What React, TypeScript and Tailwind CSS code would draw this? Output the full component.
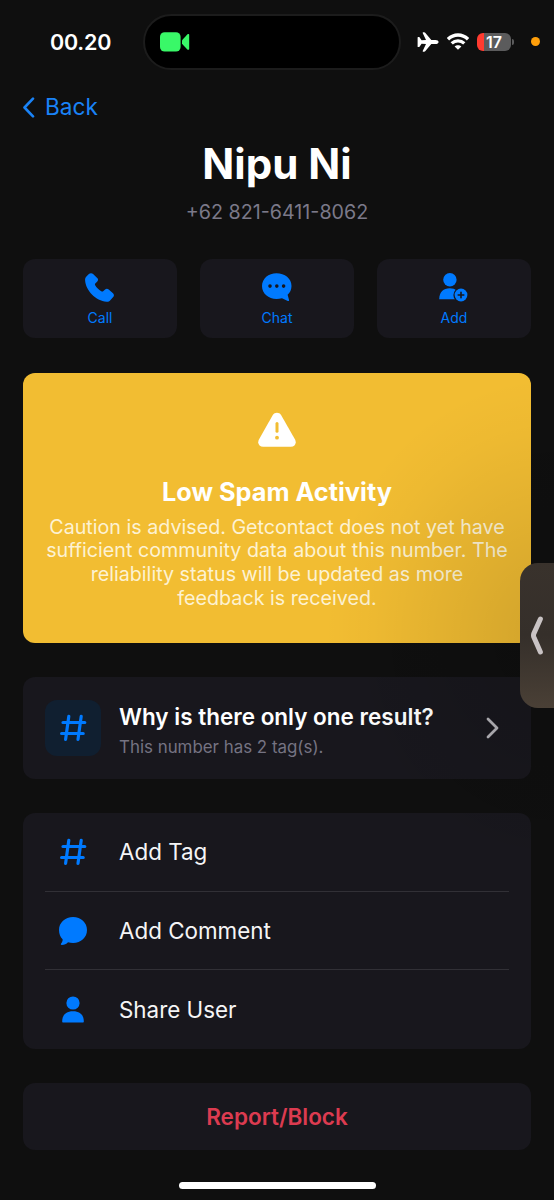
import type { ReactNode } from 'react';

function HashIcon() {
  return (
    <svg className="w-7 h-7" viewBox="0 0 28 28" fill="none" stroke="currentColor" strokeWidth="3.2" strokeLinecap="round">
      <path d="M4 8.5H25.8M2.6 19.5H24.2M9.8 2.4L6.6 25.4M22.2 2.4L19 25.4" />
    </svg>
  );
}

function PhoneIcon() {
  return (
    <svg className="w-[29px] h-[29px] -ml-px" viewBox="0 0 29 29" fill="currentColor">
      <path d="M3.6 1.2C4.9-.1 6.9-.2 8.1 1L12.2 5.1C13.4 6.3 13.3 7.3 12.3 8.4L10.5 10.2C9.8 10.9 9.8 11.6 10.2 12.3C11.4 14.5 13.8 16.9 16.3 18.3C17.1 18.7 17.8 18.6 18.4 18L20.1 16.5C21.2 15.5 22.6 15.5 23.7 16.5L28 20.3C29.2 21.4 29.2 23 28.2 24.1L25.3 27.3C24.3 28.4 23.2 28.9 21.6 28.8C10.8 28.1.6 17.3.1 7.3C0 5.6.4 4.5 1.4 3.4Z" />
    </svg>
  );
}

function ChatIcon() {
  return (
    <svg className="w-[30px] h-[29px]" viewBox="0 0 30 29">
      <path
        fill="currentColor"
        d="M14.5.2C22.8.2 29.5 5.4 29.5 13C29.5 16.7 28 19.5 25.6 21.8L27 26.8C27.3 27.8 26.7 28.3 25.8 27.9L20 25.2C18.2 25.8 16.4 26 14.5 26C6.5 26 0 20.8 0 13.1C0 5.4 6.5.2 14.5.2Z"
      />
      <circle cx="8" cy="13.1" r="1.8" fill="#18171d" />
      <circle cx="14.8" cy="13.1" r="1.8" fill="#18171d" />
      <circle cx="21.6" cy="13.1" r="1.8" fill="#18171d" />
    </svg>
  );
}

function AddUserIcon() {
  return (
    <svg className="w-[29px] h-[29px] -ml-px" viewBox="0 0 29 29">
      <circle cx="10.9" cy="6.8" r="6.7" fill="currentColor" />
      <path d="M.2 26.2C.2 19 4.6 15.2 10.6 15.2C16.6 15.2 20 18 20 26.2Z" fill="currentColor" />
      <circle cx="22" cy="22" r="7.6" fill="#18171d" />
      <circle cx="22" cy="22" r="6.4" fill="currentColor" />
      <path d="M22 19.2V24.8M19.2 22H24.8" stroke="#18171d" strokeWidth="1.6" strokeLinecap="round" />
    </svg>
  );
}

function CommentIcon() {
  return (
    <svg className="w-7 h-7" viewBox="0 0 28 28" fill="currentColor">
      <path d="M14.1 0C22 0 28 5.6 28 13C28 20.4 22 26 14.1 26C12.2 26 10.5 25.7 9 25.2C7.4 26.9 5.3 27.9 2.8 28C1.8 28 1.6 27.2 2.1 26.5C3.2 25.1 3.9 23.7 3.6 22.3C1.3 20 0 16.8 0 13C0 5.6 6.1 0 14.1 0Z" />
    </svg>
  );
}

function UserIcon() {
  return (
    <svg className="w-[22px] h-[27px]" viewBox="0 0 22 27" fill="currentColor">
      <circle cx="11" cy="7" r="6.6" />
      <path d="M.2 25.4C.2 18.8 4.2 15.2 11 15.2C17.8 15.2 21.8 18.8 21.8 25.4C21.8 26.1 21.5 26.4 20.8 26.4H1.2C.5 26.4.2 26.1.2 25.4Z" />
    </svg>
  );
}

function StatusBar() {
  return (
    <header className="flex h-[83px] items-center text-white">
      <div className="w-[143px] pl-[50px] text-[21.5px] leading-7 font-semibold tracking-[-0.2px]">00.20</div>
      <div className="flex h-[56px] w-[258px] items-center rounded-full border-2 border-[#1c1c1c] bg-black pl-[15px]">
        <svg className="w-[30px] h-5" viewBox="0 0 30 20" fill="#39f868">
          <rect x="0" y="0.2" width="20.6" height="19.4" rx="4.6" />
          <path d="M22 8.2L27.3 2.4C28.1 1.6 29.2 1.9 29.2 3V16.8C29.2 17.9 28.1 18.2 27.3 17.4L22 11.8Z" />
        </svg>
      </div>
      <svg className="ml-[16px] w-[22px] h-5" viewBox="0 0 22 20" fill="#fff">
        <path d="M1.1 4.9H1.8C2.1 4.9 2.3 5 2.5 5.3L4.6 8.2L9 8L5.8 1.3C5.5.6 5.8.3 6.5.3H7.2C7.6.3 7.9.5 8.2.8L14.3 7.9H18.5C20.2 7.9 21.6 8.8 21.6 10S20.2 12.1 18.5 12.1H14.3L8.2 19.2C7.9 19.5 7.6 19.7 7.2 19.7H6.5C5.8 19.7 5.5 19.4 5.8 18.7L9 12L4.6 11.8L2.5 14.7C2.3 15 2.1 15.1 1.8 15.1H1.1C.8 15.1.6 14.9.6 14.5V5.5C.6 5.1.8 4.9 1.1 4.9Z" />
      </svg>
      <svg className="ml-2 w-[22px] h-[17px]" viewBox="0 0 22 17" fill="none" stroke="#fff" strokeWidth="3.3">
        <path d="M1 6.2C6.8.6 15.2.6 21 6.2" />
        <path d="M4.7 10.4C8.3 7 13.7 7 17.3 10.4" />
        <path d="M11 16.8L7.6 13.6C9.4 11.8 12.6 11.8 14.4 13.6Z" fill="#fff" stroke="none" />
      </svg>
      <div className="ml-[8px] flex h-[18px] w-[34px] items-center justify-center overflow-hidden rounded-md bg-gradient-to-r from-[#ff3b30] from-[20%] to-[#5b5b5c] to-[20%] text-[16px] leading-none font-semibold">
        17
      </div>
      <div className="ml-px h-[6px] w-[2px] rounded-r-full bg-[#5b5b5c]" />
      <div className="ml-[17px] h-[9px] w-[9px] rounded-full bg-[#ff9f0a]" />
    </header>
  );
}

function ActionButton({ icon, label }: { icon: ReactNode; label: string }) {
  return (
    <button className="flex h-[79px] flex-1 flex-col items-center rounded-xl bg-[#18171d] pt-[13.5px] text-[#007aff]">
      {icon}
      <span className="mt-[6.5px] text-[14px] leading-5">{label}</span>
    </button>
  );
}

function MenuRow({ icon, label }: { icon: ReactNode; label: string }) {
  return (
    <li className="flex h-[78.7px] items-center">
      <span className="flex w-14 justify-center text-[#007aff]">{icon}</span>
      <span className="ml-[18px] pt-px text-[22.4px] leading-7 text-[#f5f5f6]">{label}</span>
    </li>
  );
}

export default function App() {
  return (
    <div className="relative h-[1200px] w-[554px] overflow-hidden bg-[#0f0f0f] font-['Inter',sans-serif]">
      <StatusBar />

      <main className="flex flex-col px-[23px]">
        <button className="mt-[9px] flex h-[30px] items-center self-start text-[#1a83f7]">
          <svg className="w-3 h-[21px]" viewBox="0 0 12 21" fill="none" stroke="currentColor" strokeWidth="2.6" strokeLinecap="round" strokeLinejoin="round">
            <path d="M10 1.6L1.5 10.5L10 19.4" />
          </svg>
          <span className="ml-[10px] text-[22.6px] leading-none">Back</span>
        </button>

        {/* Contact name and number */}
        <h1 className="mt-[17px] text-center text-[42px] leading-[50px] font-bold text-white">Nipu Ni</h1>
        <p className="mt-[11px] text-center text-[19.7px] leading-6 text-[#7b7989]">+62 821-6411-8062</p>

        <div className="mt-[35px] flex gap-[23px]">
          <ActionButton icon={<PhoneIcon />} label="Call" />
          <ActionButton icon={<ChatIcon />} label="Chat" />
          <ActionButton icon={<AddUserIcon />} label="Add" />
        </div>

        {/* Spam status */}
        <section className="mt-[35px] flex h-[270px] flex-col items-center rounded-xl bg-[#f2bd32] pt-[39px] text-center">
          <svg className="w-[38px] h-[36px]" viewBox="0 0 38 36">
            <path
              fill="#fff"
              d="M14.8 3C16.8 0 21.2 0 23.2 3.2L36.9 27.2C39 31 37 34.8 32.8 34.8H5.2C1 34.8-1 31 1.1 27.2Z"
            />
            <path d="M19 11.5V19.3" stroke="#f2bd32" strokeWidth="3" strokeLinecap="round" />
            <circle cx="19" cy="25.7" r="1.9" fill="#f2bd32" />
          </svg>
          <h2 className="mt-[28px] text-[25.3px] leading-8 font-bold text-white">Low Spam Activity</h2>
          <p className="mt-[7.5px] text-[19.7px] leading-[23.9px] text-[#fdf2d2]">
            Caution is advised. Getcontact does not yet have
            <br />
            sufficient community data about this number. The
            <br />
            reliability status will be updated as more
            <br />
            feedback is received.
          </p>
        </section>

        <section className="mt-[34px] flex h-[102px] items-center rounded-xl bg-[#18171d] px-[22px]">
          <div className="flex h-14 w-14 items-center justify-center rounded-xl bg-[#101f30] text-[#007aff]">
            <HashIcon />
          </div>
          <div className="ml-[18px] flex-1 pt-1.5">
            <h3 className="text-[22.5px] leading-7 font-semibold text-white">Why is there only one result?</h3>
            <p className="mt-1 text-[16.9px] leading-6 text-[#757382]">This number has 2 tag(s).</p>
          </div>
          <svg className="mr-[10px] w-[13px] h-[22px]" viewBox="0 0 13 22" fill="none" stroke="#b4b3b8" strokeWidth="2.8" strokeLinecap="round" strokeLinejoin="round">
            <path d="M2 2L11 11L2 20" />
          </svg>
        </section>

        <ul className="mt-[34px] divide-y divide-[#313036] rounded-xl bg-[#18171d] px-[22px]">
          <MenuRow icon={<HashIcon />} label="Add Tag" />
          <MenuRow icon={<CommentIcon />} label="Add Comment" />
          <MenuRow icon={<UserIcon />} label="Share User" />
        </ul>

        <button className="mt-[34px] h-[67px] rounded-xl bg-[#18171d] text-[22.5px] font-semibold text-[#dc3b50]">
          Report/Block
        </button>
      </main>

      {/* Shadow cast by the collapsed picture-in-picture tab */}
      <div className="pointer-events-none absolute top-[376px] right-[-230px] h-[520px] w-[460px] bg-[radial-gradient(closest-side,rgba(0,0,0,0.14),rgba(0,0,0,0.08)_40%,rgba(0,0,0,0.02)_80%,transparent)]" />
      <div className="absolute top-[563px] right-[-20px] h-[145px] w-[54px] rounded-[18px] bg-gradient-to-b from-[#39322c] via-[#352f2a] to-[#4a4036] pt-[53px] pl-[11px]">
        <svg className="w-[13px] h-[39px]" viewBox="0 0 13 39" fill="none" stroke="#c9c3c4" strokeWidth="5" strokeLinecap="round" strokeLinejoin="round">
          <path d="M9.4 3L2.8 17.6Q2.2 19.5 2.8 21L9.4 36" />
        </svg>
      </div>
      <div className="absolute bottom-[11px] left-[179px] h-[7px] w-[197px] rounded-full bg-white" />
    </div>
  );
}
